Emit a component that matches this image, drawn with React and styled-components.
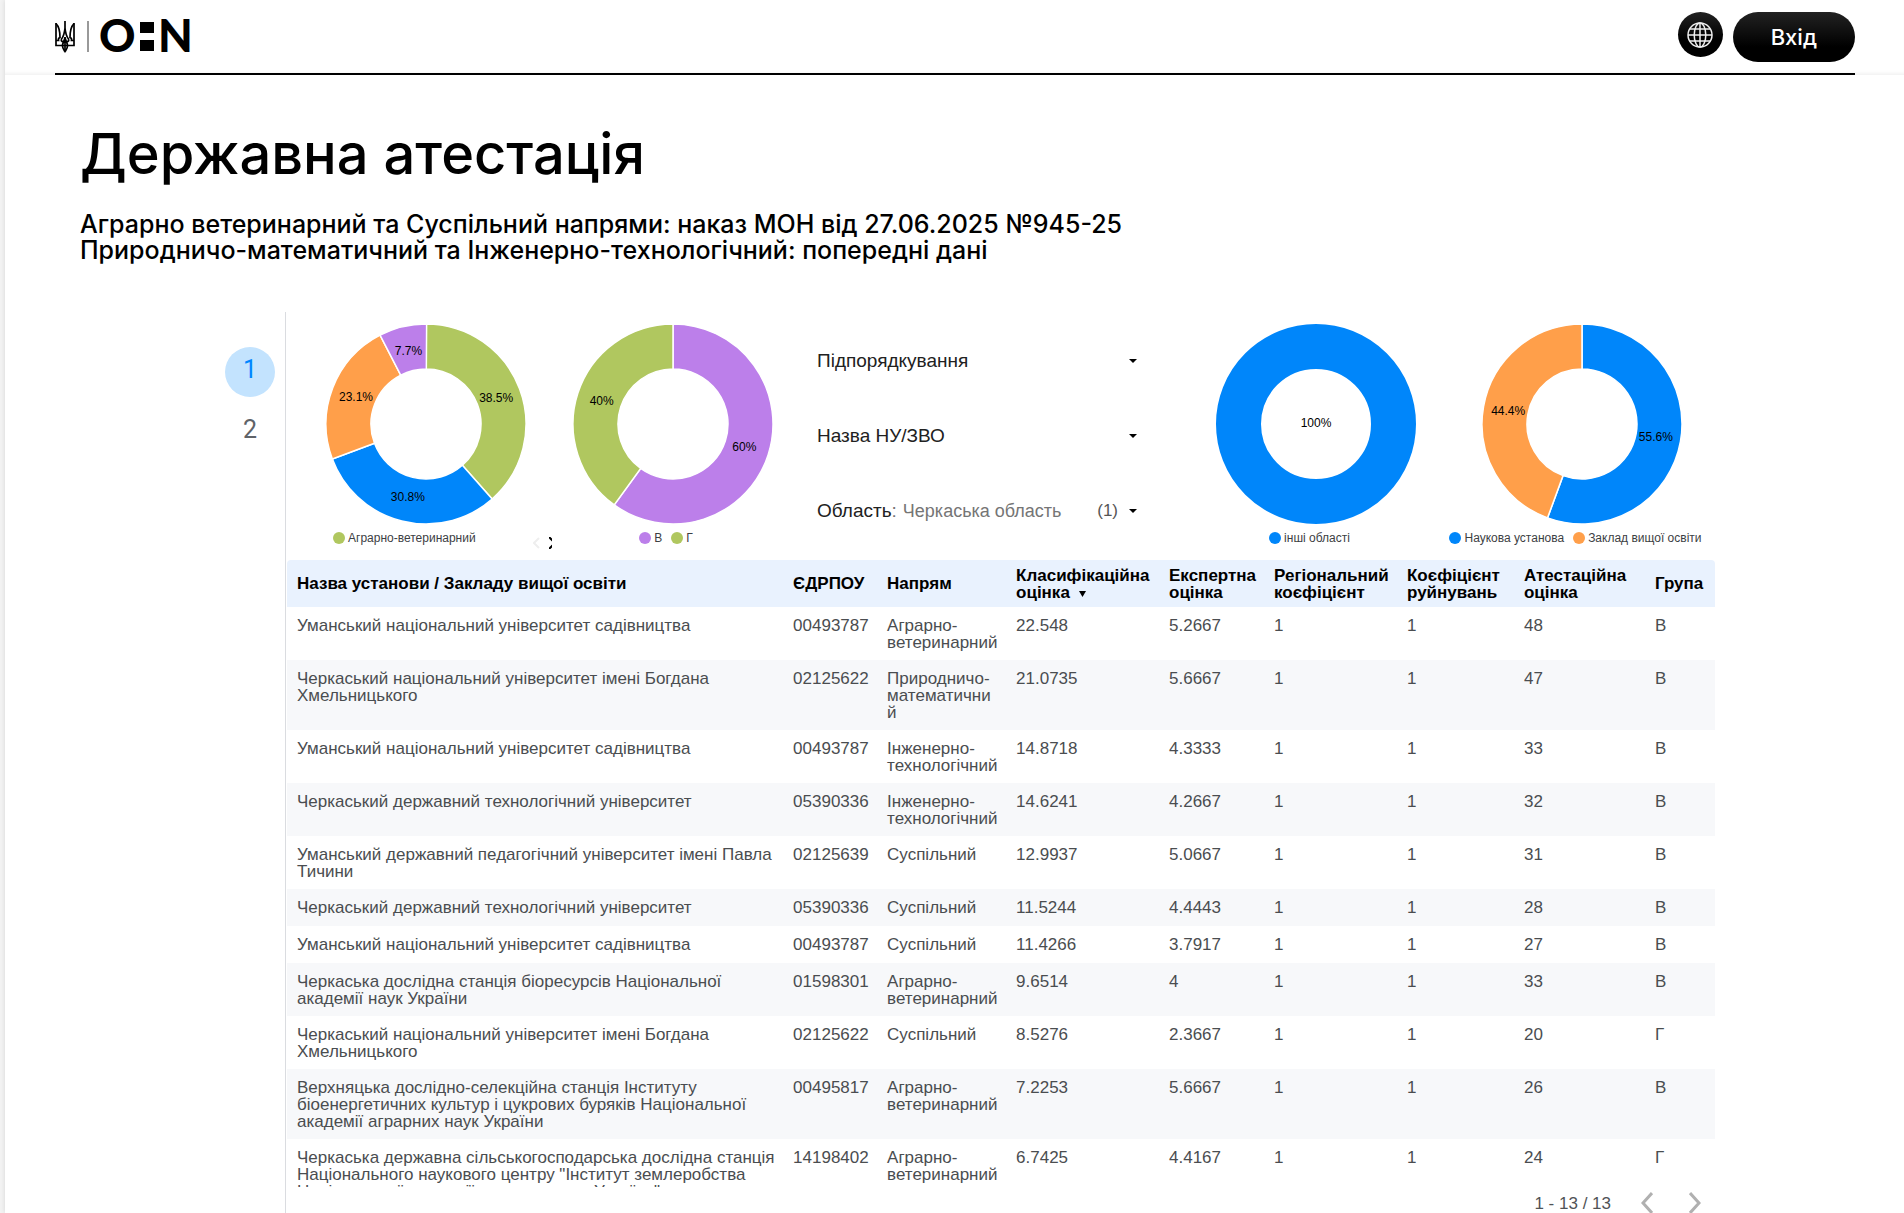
import styled, { createGlobalStyle } from "styled-components";

const GlobalStyle = createGlobalStyle`
  * {
    box-sizing: border-box;
  }

  html, body, #root {
    height: 100%;
  }

  body {
    margin: 0;
    overflow: hidden;
    background: #f3f3f3;
    color: #000;
    font-family: "Inter", "Open Sans", sans-serif;
  }
`;

const Page = styled.div`
  height: 100%;
  margin-left: 5px;
  overflow: hidden;
  display: flex;
  flex-direction: column;
  background: #fff;
  box-shadow: 0 0 5px rgba(0, 0, 0, 0.12);
`;

const Header = styled.header`
  flex: none;
  padding: 0 49px 0 50px;
  box-shadow: inset 0 -4px 4px -3px rgba(0, 0, 0, 0.08);
`;

const HeaderInner = styled.div`
  height: 75px;
  display: flex;
  align-items: flex-start;
  justify-content: space-between;
  border-bottom: 2px solid #000;
`;

const LogoLink = styled.a`
  svg {
    display: block;
  }
`;

const HeaderActions = styled.div`
  display: flex;
  align-items: flex-start;
  gap: 10px;
  padding-top: 12px;
`;

const LangButton = styled.button`
  width: 45px;
  height: 45px;
  padding: 0;
  border: 0;
  border-radius: 50%;
  display: flex;
  align-items: center;
  justify-content: center;
  background: linear-gradient(#222, #000 60%);
  cursor: pointer;
`;

const LoginButton = styled.button`
  height: 50px;
  padding: 0 38px;
  border: 0;
  border-radius: 25px;
  background: linear-gradient(#222, #000 70%);
  color: #fff;
  font-family: inherit;
  font-size: 22px;
  font-weight: 500;
  cursor: pointer;
`;

const Main = styled.main`
  flex: 1;
  min-height: 0;
  display: flex;
  flex-direction: column;
  padding-top: 49px;
`;

const Title = styled.h1`
  margin: 0 75px;
  font-size: 56px;
  line-height: 60px;
  font-weight: 500;
`;

const Subtitle = styled.p`
  margin: 27px 75px 0;
  font-size: 25px;
  line-height: 26px;
  font-weight: 500;
`;

const Report = styled.section`
  flex: 1;
  min-height: 0;
  margin: 49px 189px 0 220px;
  display: flex;
  font-family: "Liberation Sans", Arial, sans-serif;
`;

const PageNav = styled.nav`
  flex: none;
  width: 60px;
  padding-top: 35px;
  display: flex;
  flex-direction: column;
  gap: 10px;
`;

const PageLink = styled.a`
  width: 50px;
  height: 50px;
  border-radius: 50%;
  background: ${(props) => (props.$active ? "#c3e3fe" : "transparent")};
  color: ${(props) => (props.$active ? "#0086ff" : "#5f6368")};
  font-family: Roboto, sans-serif;
  font-size: 25px;
  line-height: 46px;
  text-align: center;
  text-decoration: none;
`;

const Canvas = styled.div`
  flex: 1;
  min-width: 0;
  display: flex;
  flex-direction: column;
  border-left: 1px solid #dadce0;
  padding-left: 1px;
`;

const ChartsRow = styled.div`
  flex: none;
  height: 248px;
  padding: 12px 0 0 15px;
  display: grid;
  grid-template-columns: 247fr 247fr 387fr 266fr 266fr;
`;

const ChartCell = styled.figure`
  margin: 0;
  min-width: 0;
  display: flex;
  flex-direction: column;
  align-items: center;
`;

const Legend = styled.figcaption`
  width: 100%;
  display: flex;
  align-items: flex-start;
  justify-content: ${(props) => (props.$paged ? "space-between" : "center")};
  padding: ${(props) => (props.$paged ? "7px 0 0 31px" : "7px 4px 0 0")};
`;

const LegendItem = styled.span`
  display: flex;
  align-items: center;
  gap: 3px;
  margin-right: 9px;
  color: #3c4043;
  font-size: 12px;
  line-height: 14px;
  white-space: nowrap;
`;

const Dot = styled.span`
  width: 12px;
  height: 12px;
  border-radius: 50%;
  background: ${(props) => props.$color};
`;

const LegendPager = styled.span`
  display: flex;
  gap: 9px;
  margin-right: -3px;
  padding-top: 6px;
`;

const Filters = styled.div`
  padding: 24px 46px 0 21px;
  display: flex;
  flex-direction: column;
  gap: 49px;
`;

const Field = styled.div`
  height: 26px;
  display: flex;
  align-items: center;
  gap: 6px;
  color: #212121;
  font-size: 19px;

  svg {
    margin-left: 5px;
  }
`;

const Muted = styled.span`
  color: #757575;
`;

const Count = styled.span`
  color: #555;
  font-size: 17px;
`;

const Select = styled.select`
  flex: 1;
  min-width: 0;
  padding: 0;
  border: 0;
  appearance: none;
  background: transparent;
  color: #757575;
  font-family: inherit;
  font-size: 18px;
`;

const TableViewport = styled.div`
  flex: none;
  height: 627px;
  overflow: hidden;
`;

const Table = styled.table`
  width: 100%;
  table-layout: fixed;
  border-collapse: collapse;
  font-size: 17px;
  line-height: 17px;
`;

const Th = styled.th`
  width: ${(props) => props.$width};
  height: 47px;
  padding: 0 0 0 10px;
  background: #e9f2fe;
  text-align: left;

  &:first-child {
    border-top-left-radius: 4px;
  }

  &:last-child {
    border-top-right-radius: 4px;
  }

  svg {
    margin-left: 4px;
  }
`;

const Tr = styled.tr`
  &:nth-child(even) {
    background: #f7f8fa;
  }
`;

const Td = styled.td`
  height: 37px;
  padding: 10px 8px 9px 10px;
  vertical-align: top;
  color: #4a4d50;
  overflow-wrap: break-word;

  &:first-child {
    padding-right: 4px;
  }
`;

const Pagination = styled.div`
  display: flex;
  justify-content: flex-end;
  align-items: center;
  padding: 5px 8px 0 0;
  color: #505356;
  font-size: 17px;
  line-height: 24px;
`;

const PagerButton = styled.button`
  width: 24px;
  height: 24px;
  margin-left: 24px;
  padding: 0;
  border: 0;
  background: none;
  cursor: pointer;
`;

const GREEN = "#b0c75f";
const BLUE = "#0086fa";
const ORANGE = "#ff9f4a";
const PURPLE = "#bc7fea";

const COLUMNS = [
  { title: "Назва установи / Закладу вищої освіти", width: "34.73%" },
  { title: "ЄДРПОУ", width: "6.58%" },
  { title: "Напрям", width: "9.03%" },
  { title: "Класифікаційна оцінка", width: "10.71%", sorted: true },
  { title: "Експертна оцінка", width: "7.35%" },
  { title: "Регіональний коєфіцієнт", width: "9.31%" },
  { title: "Коєфіцієнт руйнувань", width: "8.19%" },
  { title: "Атестаційна оцінка", width: "9.17%" },
  { title: "Група", width: "4.9%" },
];

const ROWS = [
  ["Уманський національний університет садівництва", "00493787", "Аграрно-ветеринарний", "22.548", "5.2667", "1", "1", "48", "В"],
  ["Черкаський національний університет імені Богдана Хмельницького", "02125622", "Природничо-математичний", "21.0735", "5.6667", "1", "1", "47", "В"],
  ["Уманський національний університет садівництва", "00493787", "Інженерно-технологічний", "14.8718", "4.3333", "1", "1", "33", "В"],
  ["Черкаський державний технологічний університет", "05390336", "Інженерно-технологічний", "14.6241", "4.2667", "1", "1", "32", "В"],
  ["Уманський державний педагогічний університет імені Павла Тичини", "02125639", "Суспільний", "12.9937", "5.0667", "1", "1", "31", "В"],
  ["Черкаський державний технологічний університет", "05390336", "Суспільний", "11.5244", "4.4443", "1", "1", "28", "В"],
  ["Уманський національний університет садівництва", "00493787", "Суспільний", "11.4266", "3.7917", "1", "1", "27", "В"],
  ["Черкаська дослідна станція біоресурсів Національної академії наук України", "01598301", "Аграрно-ветеринарний", "9.6514", "4", "1", "1", "33", "В"],
  ["Черкаський національний університет імені Богдана Хмельницького", "02125622", "Суспільний", "8.5276", "2.3667", "1", "1", "20", "Г"],
  ["Верхняцька дослідно-селекційна станція Інституту біоенергетичних культур і цукрових буряків Національної академії аграрних наук України", "00495817", "Аграрно-ветеринарний", "7.2253", "5.6667", "1", "1", "26", "В"],
  ['Черкаська державна сільськогосподарська дослідна станція Національного наукового центру "Інститут землеробства Національної академії аграрних наук України"', "14198402", "Аграрно-ветеринарний", "6.7425", "4.4167", "1", "1", "24", "Г"],
];

const Logo = () => (
  <svg width="150" height="70" viewBox="0 0 150 70" aria-label="ОН">
    <g fill="none" stroke="#000" strokeWidth="1.7" transform="translate(0 21)">
      <path d="M1 2V24.500H7.500C7.500 28 9 29 10 30.500C11 29 12.500 28 12.500 24.500H19V2" />
      <path d="M1 2.500C4.500 6 5 11 5 16.500C3 17 3.500 19.500 3.500 19.500H1M19 2.500C15.500 6 15 11 15 16.500C17 17 16.500 19.500 16.500 19.500H19" />
      <path d="M10 0V8M10 7C9.500 12 9 15 6.500 18C5.500 20.500 8 21 10 21C12 21 14.500 20.500 13.500 18C11 15 10.500 12 10 7" />
      <path d="M7.500 24.500C7.500 22 9.500 20 10 16C10.500 20 12.500 22 12.500 24.500ZM10 20V30" />
    </g>
    <rect x="32" y="21" width="2" height="31" fill="#999" />
    <g fontFamily="Lato" fontSize="45" fontWeight="900">
      <text x="44" y="52">O</text>
      <text x="103" y="52">N</text>
    </g>
    <rect x="85" y="22" width="14" height="11" />
    <rect x="85" y="40" width="14" height="11" />
  </svg>
);

const GlobeIcon = () => (
  <svg width="26" height="26" viewBox="0 0 26 26" fill="none" stroke="#eee" strokeWidth="1.500">
    <circle cx="13" cy="13" r="12" />
    <ellipse cx="13" cy="13" rx="5.800" ry="12" />
    <path d="M13 1V25M1 13H25M3 7H23M3 19H23" />
  </svg>
);

const Caret = () => (
  <svg width="8" height="4" viewBox="0 0 8 4">
    <path d="M0 0H8L4 4Z" fill="#000" />
  </svg>
);

const SortArrow = () => (
  <svg width="7" height="7" viewBox="0 0 7 7">
    <path d="M0 0H7L3.500 6Z" fill="#000" />
  </svg>
);

const point = (share, r) => {
  const a = share * 2 * Math.PI;
  return [Math.sin(a) * r, -Math.cos(a) * r];
};

const slicePath = (from, to) => {
  const large = to - from > 0.5 ? 1 : 0;
  return `M${point(from, 100)}A100 100 0 ${large} 1 ${point(to, 100)}L${point(to, 55)}A55 55 0 ${large} 0 ${point(from, 55)}Z`;
};

const Donut = ({ slices }) => {
  let start = 0;
  return (
    <svg width="202" height="200" viewBox="-101 -100 202 200">
      {slices.map(({ value, color }) => {
        if (slices.length === 1) {
          return (
            <g key={color}>
              <circle r="77.500" fill="none" stroke={color} strokeWidth="45" />
              <text y="3" fontSize="12" textAnchor="middle">{value}%</text>
            </g>
          );
        }
        const from = start;
        const to = from + value / 100;
        start = to;
        const [x, y] = point((from + to) / 2, 75);
        return (
          <g key={color}>
            <path d={slicePath(from, to)} fill={color} stroke="#fff" strokeWidth="1.500" />
            <text x={x} y={y + 4} fontSize="12" textAnchor="middle">{value}%</text>
          </g>
        );
      })}
    </svg>
  );
};

const Chart = ({ slices, legend, paged }) => (
  <ChartCell>
    <Donut slices={slices} />
    <Legend $paged={paged}>
      {legend.map(([label, color]) => (
        <LegendItem key={label}>
          <Dot $color={color} />
          {label}
        </LegendItem>
      ))}
      {paged && (
        <LegendPager>
          <svg width="7" height="12" viewBox="0 0 7 12" fill="none" stroke="#eee" strokeWidth="2">
            <path d="M6 1L1 6L6 11" />
          </svg>
          <svg width="3" height="12" viewBox="0 0 3 12" fill="none" stroke="#000" strokeWidth="2">
            <path d="M0 0L6 6L0 12" />
          </svg>
        </LegendPager>
      )}
    </Legend>
  </ChartCell>
);

const App = () => {
  return (
    <>
      <GlobalStyle />
      <Page>
        <Header>
          <HeaderInner>
            <LogoLink href="#">
              <Logo />
            </LogoLink>
            <HeaderActions>
              <LangButton aria-label="Мова">
                <GlobeIcon />
              </LangButton>
              <LoginButton>Вхід</LoginButton>
            </HeaderActions>
          </HeaderInner>
        </Header>

        <Main>
          <Title>Державна атестація</Title>
          <Subtitle>
            Аграрно ветеринарний та Суспільний напрями: наказ МОН від 27.06.2025 №945-25
            <br />
            Природничо-математичний та Інженерно-технологічний: попередні дані
          </Subtitle>

          <Report>
            <PageNav>
              <PageLink href="#1" $active>1</PageLink>
              <PageLink href="#2">2</PageLink>
            </PageNav>

            <Canvas>
              <ChartsRow>
                <Chart
                  paged
                  slices={[
                    { value: 38.5, color: GREEN },
                    { value: 30.8, color: BLUE },
                    { value: 23.1, color: ORANGE },
                    { value: 7.7, color: PURPLE },
                  ]}
                  legend={[["Аграрно-ветеринарний", GREEN]]}
                />
                <Chart
                  slices={[
                    { value: 60, color: PURPLE },
                    { value: 40, color: GREEN },
                  ]}
                  legend={[["В", PURPLE], ["Г", GREEN]]}
                />
                <Filters>
                  <Field>
                    <label htmlFor="subordination">Підпорядкування</label>
                    <Select id="subordination" />
                    <Caret />
                  </Field>
                  <Field>
                    <label htmlFor="institution">Назва НУ/ЗВО</label>
                    <Select id="institution" />
                    <Caret />
                  </Field>
                  <Field>
                    <label htmlFor="region">
                      Область<Muted>:</Muted>
                    </label>
                    <Select id="region">
                      <option>Черкаська область</option>
                    </Select>
                    <Count>(1)</Count>
                    <Caret />
                  </Field>
                </Filters>
                <Chart
                  slices={[{ value: 100, color: BLUE }]}
                  legend={[["інші області", BLUE]]}
                />
                <Chart
                  slices={[
                    { value: 55.6, color: BLUE },
                    { value: 44.4, color: ORANGE },
                  ]}
                  legend={[["Наукова установа", BLUE], ["Заклад вищої освіти", ORANGE]]}
                />
              </ChartsRow>

              <TableViewport>
                <Table>
                  <thead>
                    <tr>
                      {COLUMNS.map((col) => (
                        <Th key={col.title} $width={col.width}>
                          {col.title} {col.sorted && <SortArrow />}
                        </Th>
                      ))}
                    </tr>
                  </thead>
                  <tbody>
                    {ROWS.map((row, i) => (
                      <Tr key={i}>
                        {row.map((cell, j) => (
                          <Td key={j}>{cell}</Td>
                        ))}
                      </Tr>
                    ))}
                  </tbody>
                </Table>
              </TableViewport>

              <Pagination>
                1 - 13 / 13
                <PagerButton aria-label="Попередня">
                  <svg width="12" height="22" viewBox="0 0 12 22" fill="none" stroke="#b0b0b0" strokeWidth="3">
                    <path d="M11 1L2 11L11 21" />
                  </svg>
                </PagerButton>
                <PagerButton aria-label="Наступна">
                  <svg width="12" height="22" viewBox="0 0 12 22" fill="none" stroke="#b0b0b0" strokeWidth="3">
                    <path d="M1 1L10 11L1 21" />
                  </svg>
                </PagerButton>
              </Pagination>
            </Canvas>
          </Report>
        </Main>
      </Page>
    </>
  );
};

export default App;
